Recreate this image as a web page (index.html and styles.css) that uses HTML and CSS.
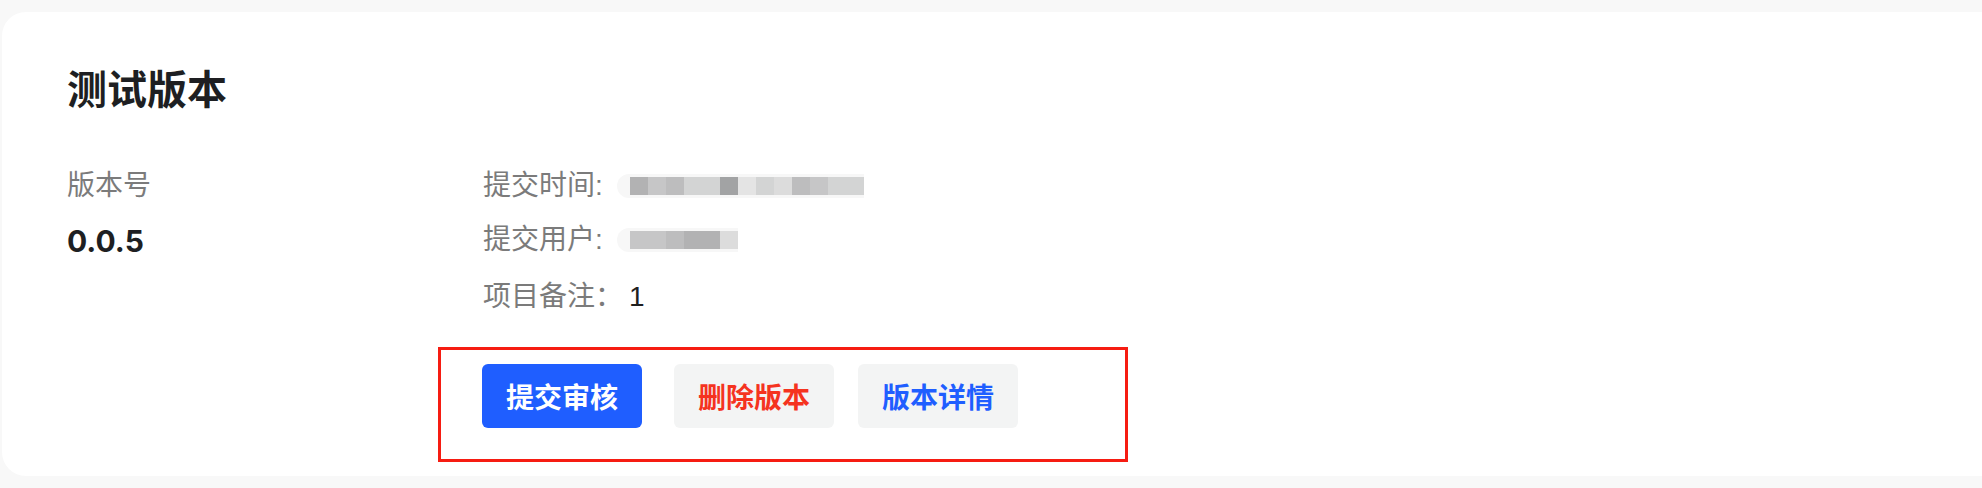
FILE: index.html
```html
<!DOCTYPE html>
<html lang="zh-CN">
<head>
<meta charset="utf-8">
<title>测试版本</title>
<link rel="stylesheet" href="styles.css">
</head>
<body>
<div class="card">
  <h1 class="title">测试版本</h1>
  <div class="info">
    <div class="left">
      <div class="label">版本号</div>
      <div class="version">0.0.5</div>
    </div>
    <div class="right">
      <div class="row">
        <span class="label">提交时间:</span>
        <span class="mosaic">
          <i class="b s2"></i><i class="b s4"></i><i class="b s3"></i><i class="b s5"></i><i class="b s5"></i><i class="b s1"></i><i class="b s7"></i><i class="b s5"></i><i class="b s6"></i><i class="b s3"></i><i class="b s4"></i><i class="b s5"></i><i class="b s5"></i>
        </span>
      </div>
      <div class="row">
        <span class="label">提交用户:</span>
        <span class="mosaic">
          <i class="b s4"></i><i class="b s4"></i><i class="b s3"></i><i class="b s2"></i><i class="b s2"></i><i class="b s6"></i>
        </span>
      </div>
      <div class="row row-last">
        <span class="label">项目备注：</span>
        <span class="value">1</span>
      </div>
    </div>
  </div>
  <div class="actions">
    <button class="btn btn-primary">提交审核</button>
    <button class="btn btn-danger">删除版本</button>
    <button class="btn btn-link">版本详情</button>
  </div>
</div>
</body>
</html>
```
FILE: styles.css
```css
html, body {
  margin: 0;
  padding: 0;
}
body {
  background: #f8f8f8;
  width: 1982px;
  height: 488px;
  overflow: hidden;
  font-family: "Liberation Sans", "Noto Sans CJK SC", sans-serif;
}
.card {
  margin: 12px 0 0 2px;
  height: 464px;
  box-sizing: border-box;
  background: #ffffff;
  border-radius: 24px 0 0 24px;
  padding: 55px 0 0 65px;
}
.title {
  margin: 0;
  font-family: "Noto Sans CJK SC", sans-serif;
  font-size: 40px;
  line-height: 40px;
  font-weight: 700;
  color: #1e1f22;
}
.info {
  display: flex;
  margin-top: 65px;
}
.left {
  width: 416px;
  display: flex;
  flex-direction: column;
}
.label {
  font-size: 28px;
  line-height: 28px;
  color: #7b7b7b;
  white-space: nowrap;
}
.version {
  margin-top: 26px;
  font-family: Inter, "Liberation Sans", sans-serif;
  font-size: 30px;
  line-height: 30px;
  font-weight: 700;
  color: #1e1f22;
}
.right {
  display: flex;
  flex-direction: column;
  gap: 26px;
}
.row {
  display: flex;
  align-items: center;
  height: 28px;
}
.row-last {
  margin-top: 3px;
}
.mosaic {
  display: flex;
  margin-left: 14px;
  padding: 3px 0 3px 13px;
  background: #f7f7f7;
  border-radius: 12px 0 0 12px;
}
.b {
  display: block;
  width: 18px;
  height: 18px;
}
.s1 { background: #a2a3a4; }
.s2 { background: #b2b2b3; }
.s3 { background: #bdbdbe; }
.s4 { background: #c6c6c7; }
.s5 { background: #d3d4d4; }
.s6 { background: #dcdcdc; }
.s7 { background: #e4e4e4; }
.value {
  margin-left: 6px;
  font-size: 28px;
  line-height: 28px;
  color: #1f1f1f;
}
.actions {
  display: flex;
  margin: 36px 0 0 371px;
  width: 690px;
  height: 115px;
  box-sizing: border-box;
  border: 3px solid #f61c12;
  padding: 14px 0 0 41px;
}
.btn {
  width: 160px;
  height: 64px;
  border: none;
  border-radius: 6px;
  font-family: "Noto Sans CJK SC", sans-serif;
  font-size: 28px;
  font-weight: 700;
  padding: 0;
  margin-right: 24px;
  background: #f3f4f4;
}
.btn-primary {
  background: #1f5eff;
  color: #ffffff;
  margin-right: 32px;
}
.btn-danger {
  color: #f5331f;
}
.btn-link {
  color: #1f5eff;
}
```
